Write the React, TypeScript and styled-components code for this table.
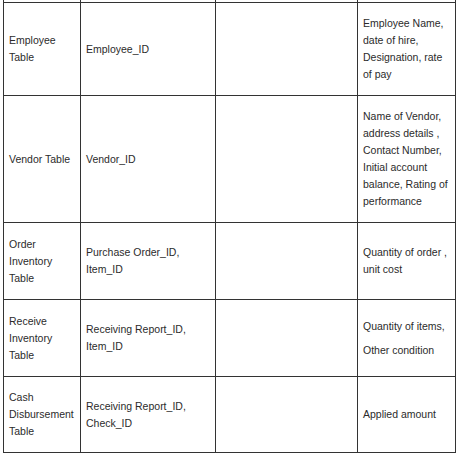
import React from "react";
import styled, { createGlobalStyle } from "styled-components";

type Row = {
  height: number;
  table: string[];
  keys: string[];
  details: string[];
  spaced?: boolean;
};

const rows: Row[] = [
  {
    height: 92,
    table: ["Employee", "Table"],
    keys: ["Employee_ID"],
    details: ["Employee Name,", "date of hire,", "Designation, rate", "of pay"],
  },
  {
    height: 126,
    table: ["Vendor Table"],
    keys: ["Vendor_ID"],
    details: [
      "Name of Vendor,",
      "address details ,",
      "Contact Number,",
      "Initial account",
      "balance, Rating of",
      "performance",
    ],
  },
  {
    height: 76,
    table: ["Order", "Inventory", "Table"],
    keys: ["Purchase Order_ID,", "Item_ID"],
    details: ["Quantity of order ,", "unit cost"],
  },
  {
    height: 76,
    table: ["Receive", "Inventory", "Table"],
    keys: ["Receiving Report_ID,", "Item_ID"],
    details: ["Quantity of items,", "Other condition"],
    spaced: true,
  },
  {
    height: 75,
    table: ["Cash", "Disbursement", "Table"],
    keys: ["Receiving Report_ID,", "Check_ID"],
    details: ["Applied amount"],
  },
];

const GlobalStyle = createGlobalStyle`
  html, body {
    margin: 0;
    padding: 0;
    background: #ffffff;
  }
`;

const Page = styled.div`
  padding-left: 3px;
  font-family: "Liberation Sans", Arial, sans-serif;
`;

const Grid = styled.div<{ $rows: string }>`
  display: grid;
  grid-template-columns: 76px 134px 141px 97px;
  grid-template-rows: ${(p) => p.$rows};
  gap: 1px;
  padding: 0 1px 1px 1px;
  width: 453px;
  box-sizing: border-box;
  background: #333333;
`;

const Cell = styled.div`
  display: flex;
  align-items: center;
  padding: 0 3px 0 5px;
  background: #ffffff;
  color: #2b2b2b;
  font-size: 10.5px;
  line-height: 17px;
  overflow: hidden;
`;

const Lines = styled.div<{ $spaced?: boolean }>`
  display: flex;
  flex-direction: column;
  gap: ${(p) => (p.$spaced ? "7px" : "0")};
  white-space: nowrap;
`;

const Stack = ({ lines, spaced }: { lines: string[]; spaced?: boolean }) => (
  <Lines $spaced={spaced}>
    {lines.map((line, i) => (
      <span key={i}>{line}</span>
    ))}
  </Lines>
);

export default function App() {
  const template = ["2px", ...rows.map((r) => `${r.height}px`)].join(" ");

  return (
    <Page>
      <GlobalStyle />
      <Grid $rows={template}>
        {/* tail of the row cut off above */}
        <Cell />
        <Cell />
        <Cell />
        <Cell />
        {rows.map((r, i) => (
          <React.Fragment key={i}>
            <Cell>
              <Stack lines={r.table} />
            </Cell>
            <Cell>
              <Stack lines={r.keys} />
            </Cell>
            <Cell />
            <Cell>
              <Stack lines={r.details} spaced={r.spaced} />
            </Cell>
          </React.Fragment>
        ))}
      </Grid>
    </Page>
  );
}
